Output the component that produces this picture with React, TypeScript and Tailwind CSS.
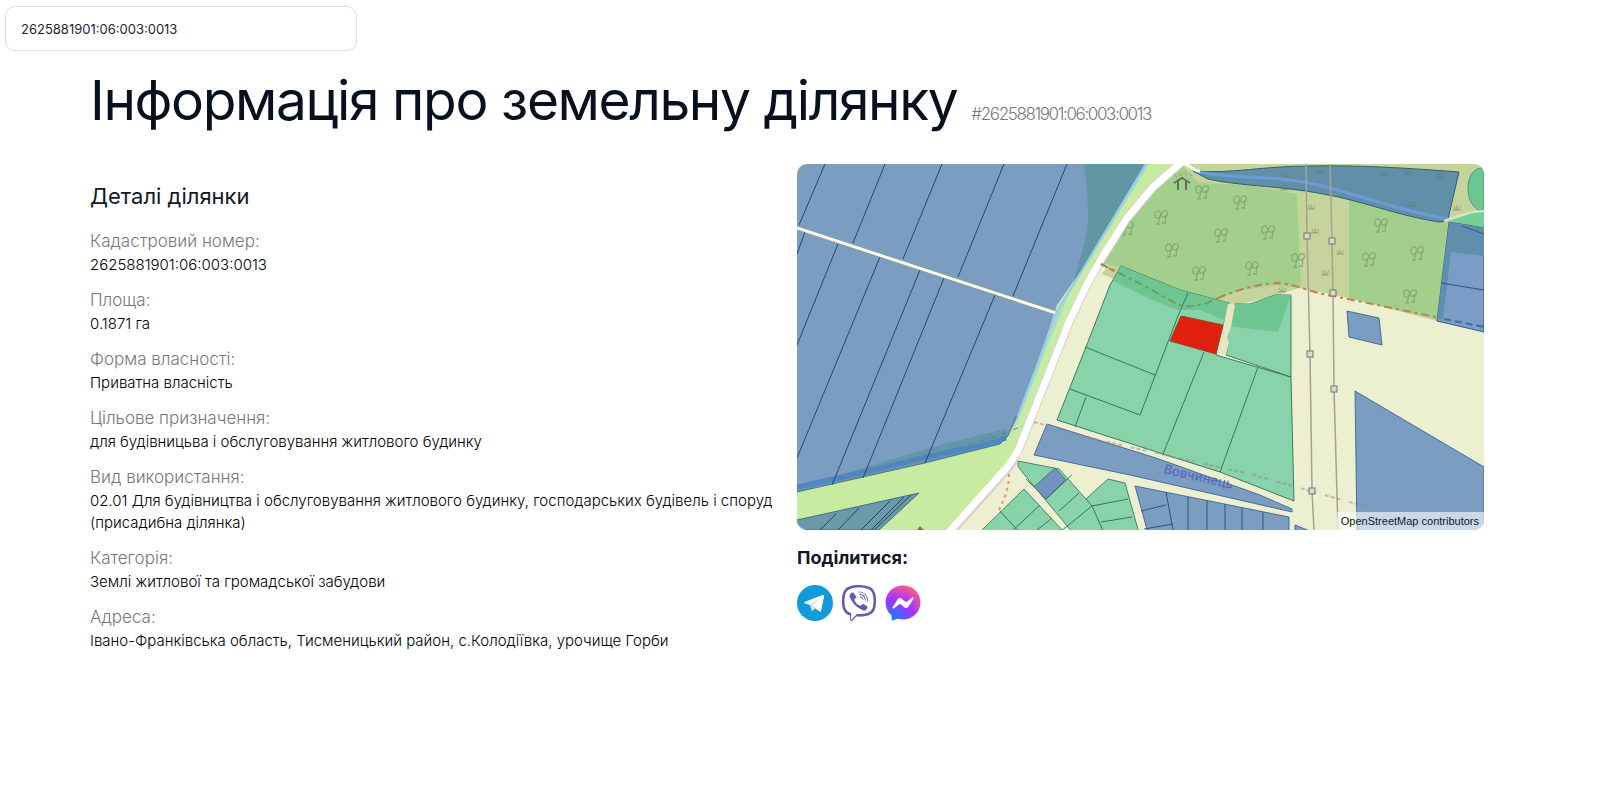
import { useState } from 'react'
import { FaFacebookMessenger, FaViber } from 'react-icons/fa'

const cadastralNumber = '2625881901:06:003:0013'

const details = [
  { label: 'Кадастровий номер:', value: cadastralNumber },
  { label: 'Площа:', value: '0.1871 га' },
  { label: 'Форма власності:', value: 'Приватна власність' },
  { label: 'Цільове призначення:', value: 'для будівницьва і обслуговування житлового будинку' },
  {
    label: 'Вид використання:',
    value:
      '02.01 Для будівництва і обслуговування житлового будинку, господарських будівель і споруд (присадибна ділянка)'
  },
  { label: 'Категорія:', value: 'Землі житлової та громадської забудови' },
  { label: 'Адреса:', value: 'Івано-Франківська область, Тисменицький район, с.Колодіївка, урочище Горби' }
]

const trees = [
  [1202, 192], [1240, 202], [1161, 217], [1127, 228], [1221, 235], [1172, 250], [1199, 273],
  [1252, 268], [1268, 232], [1298, 260], [1381, 225], [1369, 259], [1417, 253], [1410, 296]
]

const scrub = [
  [1311, 207], [1315, 231], [1340, 252], [1325, 273], [1282, 290], [1286, 175], [1320, 171],
  [1385, 174], [1408, 172], [1440, 175], [1412, 204], [1457, 208], [1284, 188], [1260, 325]
]

const pylons = [
  [1307, 236], [1332, 241], [1333, 293], [1310, 354], [1334, 389], [1312, 491]
]

function ParcelMap() {
  return (
    <svg viewBox="797 164 687 366" className="block h-auto w-full" role="img" aria-label="Карта">
      <defs>
        <g id="tree" fill="none" stroke="#7fa56c" strokeOpacity=".8" strokeWidth="1.3">
          <path d="M-3 7l2-8M4 6l1-8M-5 7h4M1 6h4" />
          <path d="M-2 1c-4 1-5-2-4-4 0-3 3-4 5-2 1 2 1 4-1 6zM4 0C0 1 0-2 1-4c1-3 4-3 5-1s0 4-2 5z" />
        </g>
        <path id="scrub" d="M-4 2h8M-1 2l-2-4M0 2v-5M1 2l3-4" fill="none" stroke="#5f7d58" strokeOpacity=".5" />
      </defs>
      <rect x="797" y="164" width="687" height="366" fill="#ecefd0" />

      {/* meadow along the road */}
      <path d="M1145 160h40l-32 26-28 32-40 66-28 66-30 84-20 32-60 64H797v-40z" fill="#c8eba2" />
      <path d="M1147 160l-92 153-39 96-10 27 10-10 34-86 20-48 82-132z" fill="#a9dcc9" />

      {/* fields to the west */}
      <path d="M797 164h348l-63 105-25 36-15 45-24 66-10 20-8 8-75 19-128 29z" fill="#7b9dc2" />
      <path d="M1084 164h61l-63 105-8 13c4-20 14-43 14-66 0-20-2-36-4-52z" fill="#6197a3" />
      <path d="M797 492l128-29 75-19 8-8-2-7-66 16-143 43z" fill="#6495ab" />
      <path d="M797 487c40-9 80-17 125-29 30-8 54-9 84-20" fill="none" stroke="#5086c4" strokeWidth="5" />
      <path d="M840 478c60-15 110-26 165-45l20-8" fill="none" stroke="#58838a" strokeDasharray="5 3 1 3" />
      <path d="M797 492l128-29 75-19 8-8 8-20" fill="none" stroke="#37658a" strokeOpacity=".7" />
      <g fill="none" stroke="#23486f" strokeWidth="1">
        <path d="M825 164l-26 61M885 164l-32 79M942 164l-39 95M1004 164l-46 113M1067 164l-54 132" />
        <path d="M805 232l-8 22M838 244l-41 101M880 257l-83 201M920 270l-88 215M944 278l-81 200M995 295l-70 168" />
      </g>
      <path d="M797 228l259 85" fill="none" stroke="#8c9b7c" strokeWidth="4" />
      <path d="M797 228l259 85" fill="none" stroke="#fbfaef" strokeWidth="3" />
      <path d="M1146 164l-63 105-26 42-15 41-24 64" fill="none" stroke="#9accec" strokeWidth="2" />
      <path d="M797 520l122-27-40 37h-82z" fill="#6b99a8" stroke="#3f7288" strokeWidth="1" />
      <path d="M836 514l-16 16M859 508l-21 22M890 501l-29 29M904 497l-33 33M911 495l-37 35" fill="none" stroke="#23486f" />
      <path d="M917 530l3-4 4 4z" fill="#7b756b" />

      {/* woods */}
      <path d="M1183 164h301v60l-47 97-88-23-50-10-24 8-36 8-30 1-32-1-75-30z" fill="#c4d49b" />
      <path d="M1183 166l-28 22-29 35-24 41 18 3 60 24 29 11 32-12 34-5 26 3-4-94-50-9-49-2z" fill="#a2d08c" />
      <path d="M1349 194l51 16 48 12-11 98-88-22z" fill="#a2d08c" />
      <path d="M1298 291l54 8-4 20-60 10z" fill="#ecefd0" />
      {trees.map(([x, y]) => (
        <use key={`${x}-${y}`} href="#tree" x={x} y={y} />
      ))}
      <path
        d="M1193 171c40 3 70-5 115-5 50-1 100 2 151 6l-11 47c-4 4-9 3-15 2-40-7-70-20-110-27-40-8-85-8-115-15z"
        fill="#628fa8"
        stroke="#315f77"
        strokeWidth="1"
      />
      <path d="M1198 172c35 7 80 3 120 13 45 11 85 27 130 34" fill="none" stroke="#6d9bd8" strokeWidth="3" />
      {scrub.map(([x, y]) => (
        <use key={`${x}-${y}`} href="#scrub" x={x} y={y} />
      ))}
      <path d="M1484 168c-10-1-16 8-16 20 0 13 6 22 16 24z" fill="#6cc691" stroke="#4b9b72" />
      <path d="M1450 221l24-9 10-1v18z" fill="#75cd98" />
      <path d="M1444 221l8-3 21-6 11-1" fill="none" stroke="#d5e8cf" strokeWidth="2" />
      <path d="M1449 222l35 6v104l-47-11z" fill="#7a9cc6" stroke="#355f8c" />
      <path d="M1449 222l35 6v28l-33-4-8 66-6 2z" fill="#608fab" />
      <path d="M1462 226l22 8M1441 283l43 7" fill="none" stroke="#31547e" strokeWidth="1" />
      <path d="M1461 230l23 8" fill="none" stroke="#6288c0" strokeWidth="2" />
      <path d="M1444 319l40 8" fill="none" stroke="#416b9c" strokeWidth="2" strokeDasharray="7 4" />

      {/* residential parcels */}
      <g stroke="#28674f" strokeOpacity=".85" strokeWidth="1">
        <path d="M1121 266l59 24 49 13-13 52 75 22 3 124-74-29-57-18-106-34 29-73 24-62z" fill="#89d3ab" />
        <path d="M1235 304h15l25-9h16v82l-65-22 2-9-3-6 4-16z" fill="#89d3ab" />
        <path d="M1121 266l59 24 49 13-5 17-24-10-22 0-30-12-35-17z" fill="#6fc592" stroke="none" />
        <path d="M1235 304h15l25-9h16l-13 37-50-6z" fill="#6fc592" stroke="none" />
        <path
          d="M1188 293l-10 23-38 99-70-26M1085 347l70 28M1086 397l-11 30M1204 352l-41 102M1258 367l-38 105"
          fill="none"
        />
      </g>
      <path d="M1228 304l7 1-4 22-4 10 2 6-3 12-10-2 8-30z" fill="#e4e6bf" />
      <path d="M1181 316l42 9-7 29-46-13z" fill="#e0200d" stroke="#8f4628" strokeWidth="1" />

      <g stroke="#34628e" strokeOpacity=".85" strokeWidth="1" fill="#7b9dc2">
        <path d="M1347 311l32 7 3 27-33-8z" />
        <path d="M1355 391l129 76v66h-127z" />
        <path d="M1047 424l109 34 104 37 32 14v3l-162-37-96-20z" />
        <path d="M1135 486l154 31v16h-141z" />
        <path d="M1295 525l20 8h-20z" />
        <path
          d="M1166 492l7 38M1141 511l25-6M1144 529l29-5M1188 497v33M1207 500v30M1225 504v26M1242 508v22M1263 512v18"
          stroke="#23486f"
        />
      </g>
      <g stroke="#35775d" strokeOpacity=".85" strokeWidth="1" fill="#89d3ab">
        <path d="M1018 461l41 8 27 30 22-20 17 4 14 50h-66l-50-60-5-7z" />
        <path d="M1024 489l40 43h-84z" />
        <path d="M1055 468l11 12-20 19-12-12z" fill="#7293c0" />
        <path
          d="M1046 499l31-29M1059 511l20-18M1092 506l-32 26M1086 499l6 7 12 27M1092 506l36-7M1101 522l31-5M1034 487l-8-8M1000 511l20 22M1040 505l-30 28M1052 518l-20 16"
          fill="none"
          stroke="#28674f"
        />
      </g>
      <path d="M1066 466l20 31 21-19-20-6z" fill="#ecefd0" />

      {/* roads and tracks */}
      <path
        d="M1184 160l-31 27-26 31-24 38-16 28-18 38-13 33-38 96-8 15-59 66"
        fill="none"
        stroke="#d8d2d0"
        strokeWidth="9"
      />
      <path
        d="M1184 160l-31 27-26 31-24 38-16 28-18 38-13 33-38 96-10 15-59 66"
        fill="none"
        stroke="#fff"
        strokeWidth="7"
      />
      <path d="M1180 162c10 2 12 9 20 9" fill="none" stroke="#fff" strokeWidth="3" />
      <path
        d="M1101 264l40 20 36 20c10 5 20 1 30-1l14-6"
        fill="none"
        stroke="#6d9c67"
        strokeWidth="2"
        strokeDasharray="8 4 3 4"
      />
      <path d="M1101 264l15 8" fill="none" stroke="#b98053" strokeWidth="2" strokeDasharray="6 3" />
      <path
        d="M1218 298c22-9 42-15 60-15 18 1 34 10 55 13l103 21"
        fill="none"
        stroke="#bd8050"
        strokeWidth="2"
        strokeDasharray="8 4 3 4"
      />
      <path
        d="M1034 422l60 17 80 18 80 18 120 34"
        fill="none"
        stroke="#938a8a"
        strokeOpacity=".5"
        strokeWidth="2"
        strokeDasharray="4 2 4 2 4 9"
      />
      <path d="M1009 474c0 14-4 24-12 40" fill="none" stroke="#ee8f78" strokeWidth="2" strokeDasharray="3 4" />

      {/* power lines */}
      <g fill="none">
        <path
          d="M1306 164l1 72 3 118 2 137 2 39M1330 164l2 77 1 52 1 96 4 141"
          stroke="#a3a294"
          strokeWidth="1.5"
        />
        {pylons.map(([x, y]) => (
          <rect key={`${x}-${y}`} x={x - 3} y={y - 3} width="6" height="6" fill="#d8dbc6" stroke="#76756f" />
        ))}
      </g>

      <path d="M1174 183l8-5 8 5M1178 181v9M1186 181v9" fill="none" stroke="#65705a" strokeWidth="2" />
      <path d="M1174 174l3 3M1179 173l2 3M1185 173l2 3M1190 173l2 3" fill="none" stroke="#8ea77c" />

      <text
        x="1163"
        y="473"
        transform="rotate(13 1163 473)"
        fill="#5a68bb"
        className="font-[Noto_Sans,sans-serif] text-[13px] font-medium"
      >
        Вовчинець
      </text>
    </svg>
  )
}

function TelegramIcon() {
  return (
    <svg viewBox="0 0 36 36" className="size-9" aria-hidden="true">
      <circle cx="18" cy="18" r="18" fill="#129bdb" />
      <path d="M8 17l18-7c.8-.3 1.3.2 1.1 1.2l-3 14.6c-.2.9-.9 1.1-1.6.7L15 21l-2-1z" fill="#fff" />
      <path d="M8 17c-.8.4-.8 1 0 1.3l5 1.6 1.8 6c.5 0 .8-.2 1.1-.5l2.3-2.2L15 21l9-8.5-11 7z" fill="#d3e3ee" />
      <path d="M8 17l18-7-13 9.8-5-1.500c-.8-.3-.8-.9 0-1.300z" fill="#fff" />
    </svg>
  )
}

export default function App() {
  const [query, setQuery] = useState(cadastralNumber)

  return (
    <div className="min-h-screen bg-white font-[Inter,sans-serif] text-[#111827]">
      <div className="px-[5px] pt-[6px]">
        <input
          type="text"
          aria-label="Кадастровий номер"
          value={query}
          onChange={(e) => setQuery(e.target.value)}
          className="block h-[45px] w-[352px] rounded-[10px] border border-[#dcdee2] bg-white px-[15px] pt-px text-[13px] text-[#1f2530] outline-none"
        />
      </div>

      <main className="pr-[116px] pl-[90px]">
        <h1 className="pt-[17px] text-[55px] leading-[64px] tracking-tight text-[#06101f]">
          Інформація про земельну ділянку{' '}
          <span className="text-[17px] font-light text-[#777780]">#{cadastralNumber}</span>
        </h1>

        <div className="mt-[18px] grid grid-cols-2 gap-x-5">
          <section className="pt-4">
            <h2 className="text-[22px] leading-8">Деталі ділянки</h2>
            <dl className="mt-4 flex flex-col gap-[11px]">
              {details.map((item) => (
                <div key={item.label}>
                  <dt className="text-[17px] leading-[26px] font-light text-[#777780]">{item.label}</dt>
                  <dd className="text-[15px] leading-[22px] font-light text-black">{item.value}</dd>
                </div>
              ))}
            </dl>
          </section>

          <section>
            <div className="relative overflow-hidden rounded-[10px]">
              <ParcelMap />
              <div className="absolute right-0 bottom-0 bg-white/60 pr-[5px] pl-1 font-['Liberation_Sans',sans-serif] text-[11px] leading-[18px]">
                OpenStreetMap contributors
              </div>
            </div>

            <h3 className="mt-[14px] text-lg leading-7 font-bold">Поділитися:</h3>
            <div className="mt-[13px] flex gap-2">
              <button type="button" aria-label="Telegram" className="size-9">
                <TelegramIcon />
              </button>
              <button type="button" aria-label="Viber" className="size-9">
                <FaViber className="size-9 text-[#6a55bb]" />
              </button>
              <button type="button" aria-label="Messenger" className="size-9">
                <svg className="absolute size-0" aria-hidden="true">
                  <radialGradient id="messenger" cx=".2" cy="1" r="1.1">
                    <stop offset="0" stopColor="#0a84ff" />
                    <stop offset=".55" stopColor="#a033ff" />
                    <stop offset="1" stopColor="#ff5c87" />
                  </radialGradient>
                </svg>
                <FaFacebookMessenger className="size-9" fill="url(#messenger)" />
              </button>
            </div>
          </section>
        </div>
      </main>
    </div>
  )
}
